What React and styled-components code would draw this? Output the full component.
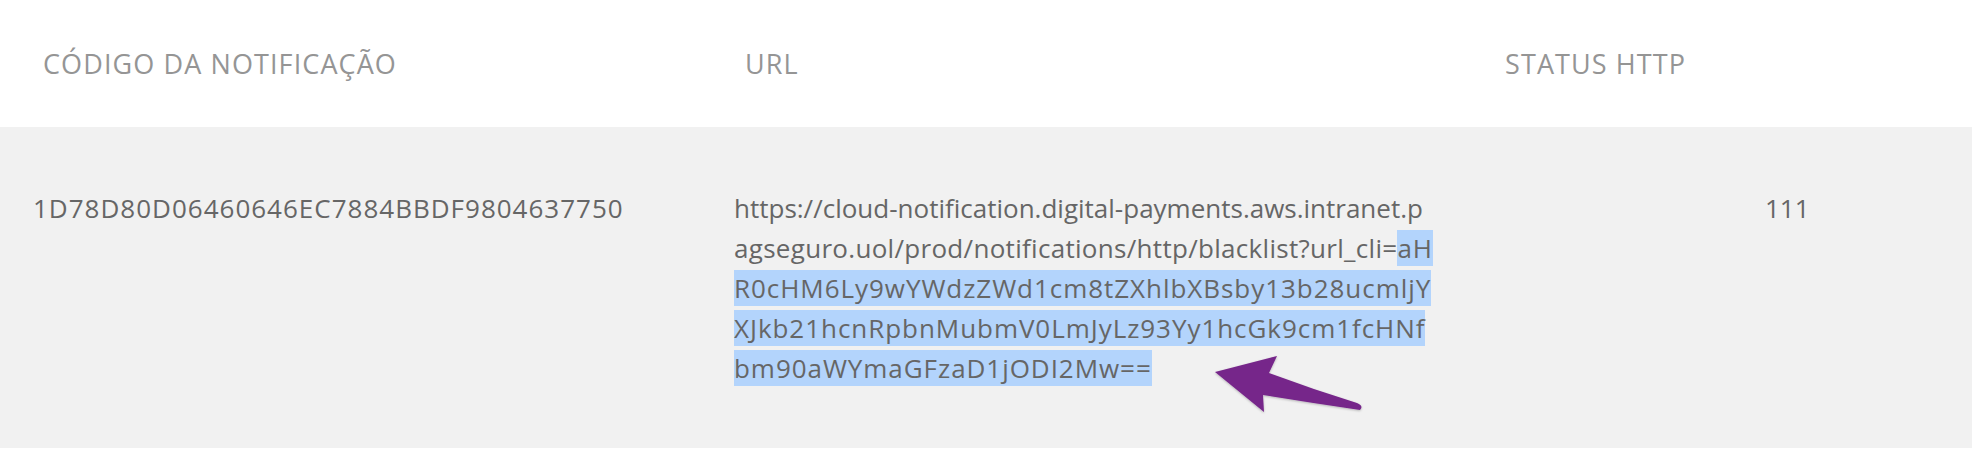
import React from "react"
import styled, { createGlobalStyle } from "styled-components"

const GlobalStyle = createGlobalStyle`
  html, body {
    margin: 0;
    padding: 0;
    background: #fff;
  }
  body {
    font-family: "Open Sans", "Liberation Sans", sans-serif;
    -webkit-font-smoothing: antialiased;
  }
`

const notification = {
  code: "1D78D80D06460646EC7884BBDF9804637750",
  status: "111",
  url: "https://cloud-notification.digital-payments.aws.intranet.p",
  urlCont: "agseguro.uol/prod/notifications/http/blacklist?url_cli=",
  selected: [
    "aH",
    "R0cHM6Ly9wYWdzZWd1cm8tZXhlbXBsby13b28ucmljY",
    "XJkb21hcnRpbnMubmV0LmJyLz93Yy1hcGk9cm1fcHNf",
    "bm90aWYmaGFzaD1jODI2Mw==",
  ],
}

const App = () => {
  return (
    <Wrapper>
      <GlobalStyle />
      <HeadRow>
        <HeadCell pad={43}>CÓDIGO DA NOTIFICAÇÃO</HeadCell>
        <HeadCell pad={45}>URL</HeadCell>
        <HeadCell pad={45}>STATUS HTTP</HeadCell>
      </HeadRow>
      <BodyRow>
        <Cell pad={33} spacing={1}>
          {notification.code}
        </Cell>
        <Cell pad={34}>
          {notification.url}
          <br />
          <Tracked>{notification.urlCont}</Tracked>
          <Selected>
            {notification.selected.map((line, i) => (
              <React.Fragment key={i}>
                {i > 0 && <br />}
                {line}
              </React.Fragment>
            ))}
          </Selected>
        </Cell>
        <Cell pad={305}>{notification.status}</Cell>
        <Arrow viewBox="0 0 180 80" aria-hidden="true">
          <defs>
            <filter id="shadow" x="-10%" y="-20%" width="130%" height="150%">
              <feDropShadow dx="0" dy="1" stdDeviation="1" floodColor="#000" floodOpacity="0.25" />
            </filter>
          </defs>
          <path
            d="M15 27 L77 11 L69 28 Q112 44 157 58 Q164 61 160 65 Q112 58 63 50 L64 67 Z"
            fill="#76278a"
            filter="url(#shadow)"
          />
        </Arrow>
      </BodyRow>
    </Wrapper>
  )
}

const Wrapper = styled.div`
  width: 1972px;
  height: 462px;
  background: #fff;
  overflow: hidden;
`

const HeadRow = styled.div`
  display: grid;
  grid-template-columns: 700px 760px 1fr;
  align-items: center;
  height: 127px;
  background: #fff;
`

const HeadCell = styled.div`
  padding-left: ${(p) => p.pad}px;
  font-size: 27px;
  letter-spacing: 1.1px;
  color: #959595;
  white-space: nowrap;
`

const BodyRow = styled.div`
  position: relative;
  display: grid;
  grid-template-columns: 700px 760px 1fr;
  align-items: start;
  height: 321px;
  box-sizing: border-box;
  padding-top: 61px;
  background: #f1f1f1;
`

const Cell = styled.div`
  padding-left: ${(p) => p.pad}px;
  font-size: 26px;
  line-height: 40px;
  letter-spacing: ${(p) => p.spacing || 0}px;
  color: #666;
  white-space: nowrap;
`

const Tracked = styled.span`
  letter-spacing: 0.3px;
`

const Selected = styled.span`
  background: #b3d4fc;
  letter-spacing: 0.95px;
`

const Arrow = styled.svg`
  position: absolute;
  left: 1200px;
  top: 218px;
  width: 180px;
  height: 80px;
  overflow: visible;
`

export default App
